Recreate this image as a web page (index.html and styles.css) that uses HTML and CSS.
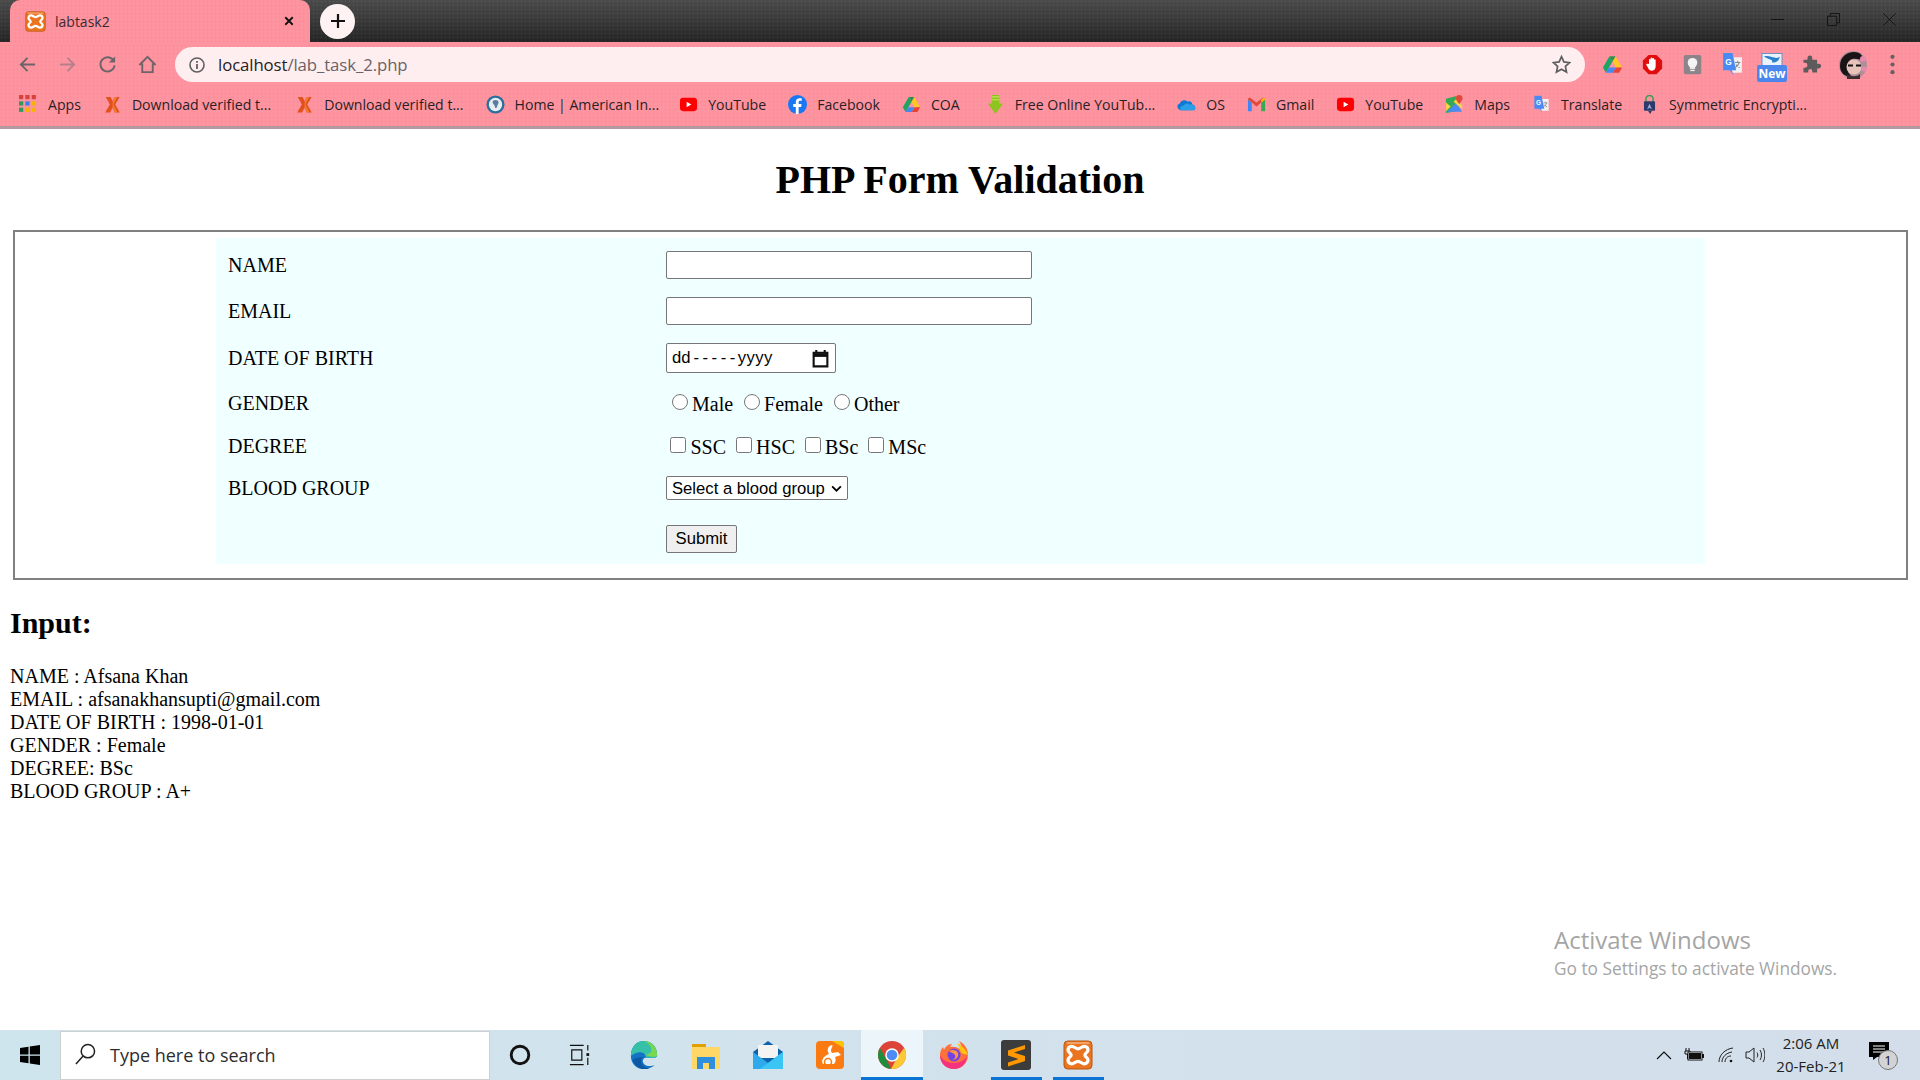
FILE: index.html
```html
<!DOCTYPE html>
<html lang="en">
<head>
<meta charset="utf-8">
<title>labtask2</title>
<link rel="stylesheet" href="styles.css">
</head>
<body>
<svg class="defs" width="0" height="0" aria-hidden="true">
  <symbol id="xampp" viewBox="0 0 24 24">
    <rect x=".8" y=".8" width="22.400" height="22.400" rx="3" fill="#ea7420" stroke="#b9560f" stroke-width=".8"/>
    <rect x="3" y="1.800" width="18" height="1.200" fill="#f7b27e"/>
    <path d="M7 5C9 5 10 7 12 7C14 7 15 5 17 5C19 5 20 6.500 20 8C20 10 17.500 10.500 17.500 12C17.500 13.500 20 14 20 16C20 17.500 19 19 17 19C15 19 14 17 12 17C10 17 9 19 7 19C5 19 4 17.500 4 16C4 14 6.500 13.500 6.500 12C6.500 10.500 4 10 4 8C4 6.500 5 5 7 5Z" fill="none" stroke="#fff" stroke-width="2.600"/>
  </symbol>
  <symbol id="bm-x" viewBox="0 0 20 20">
    <path d="M3 2h5l2.200 4.500L12.500 2h5l-4.700 8 4.900 8.500h-5.200L10 13.500 7.500 18.500H2.300L7.200 10Z" fill="#e2501d"/>
    <path d="M10.200 6.500 12.500 2h2.500l-4 8 4.200 8.500h-2.700L10 13.500Z" fill="#f27a2b"/>
  </symbol>
  <symbol id="yt" viewBox="0 0 20 20">
    <rect x="1" y="3" width="18" height="14" rx="3.500" fill="#f00"/>
    <path d="M8 7v6l5-3Z" fill="#fff"/>
  </symbol>
  <symbol id="drive" viewBox="0 0 24 24">
    <path d="M8.500 2.500h7L23 15.500h-7Z" fill="#ffc825"/>
    <path d="M8.500 2.500 1 15.500l3.500 6L12 8.500Z" fill="#1fa463"/>
    <path d="M8.500 2.500h7l-3.500 6Z" fill="#2f8a5a"/>
    <path d="M8 15.500h8l-3.500 6h-8Z" fill="#4688f1"/>
    <path d="M16 15.500h7l-3.500 6h-7Z" fill="#e94235"/>
  </symbol>
</svg>

<div class="browser">
  <div class="tabstrip">
    <div class="tab">
      <svg class="fav"><use href="#xampp"/></svg>
      <span class="tab-title">labtask2</span>
      <svg class="tab-x" viewBox="0 0 12 12"><path d="M1.500 1.500l9 9M10.500 1.500l-9 9" stroke="#111" stroke-width="2.200"/></svg>
    </div>
    <div class="newtab"><svg viewBox="0 0 16 16"><path d="M8 1v14M1 8h14" stroke="#111" stroke-width="2.200"/></svg></div>
    <div class="winctl">
      <svg viewBox="0 0 14 14"><path d="M0 7h14" stroke="#111"/></svg>
      <svg viewBox="0 0 14 14"><path d="M.5 3.500h10v10H.5ZM3.500 3.500v-3h10v10h-3" fill="none" stroke="#111"/></svg>
      <svg viewBox="0 0 14 14"><path d="M.5.5l13 13M13.500.5l-13 13" stroke="#111"/></svg>
    </div>
  </div>

  <div class="toolbar">
    <svg class="nav" viewBox="0 0 20 20"><path d="M18 10H3M10 3l-7 7 7 7" fill="none" stroke="#6b6468" stroke-width="2"/></svg>
    <svg class="nav" viewBox="0 0 20 20"><path d="M2 10h15M10 3l7 7-7 7" fill="none" stroke="#b5808a" stroke-width="2"/></svg>
    <svg class="nav" viewBox="0 0 20 20"><path d="M16.500 6A7.500 7.500 0 1 0 17.500 11" fill="none" stroke="#6b6468" stroke-width="2"/><path d="M18 1.500V8h-6.500Z" fill="#6b6468"/></svg>
    <svg class="nav" viewBox="0 0 20 20"><path d="M1.500 10.500 10 2l8.500 8.500M4.500 9v9h11V9" fill="none" stroke="#6b6468" stroke-width="2"/></svg>
    <div class="omnibox">
      <svg class="info" viewBox="0 0 16 16"><circle cx="8" cy="8" r="7" fill="none" stroke="#5f5f5f" stroke-width="1.600"/><path d="M8 7v5M8 4v1.800" stroke="#5f5f5f" stroke-width="1.800"/></svg>
      <span class="url"><b>localhost</b>/lab_task_2.php</span>
      <svg class="star" viewBox="0 0 20 20"><path d="M10 1.800l2.500 5.500 6 .7-4.400 4 1.200 6L10 15l-5.300 3 1.200-6-4.400-4 6-.7Z" fill="none" stroke="#5f5f5f" stroke-width="1.800"/></svg>
    </div>
    <div class="exts">
      <svg class="ext"><use href="#drive"/></svg>
      <svg class="ext" viewBox="0 0 24 24"><path d="M7.500 1h9L23 7.500v9L16.500 23h-9L1 16.500v-9Z" fill="#e00d0d"/><path d="M8 11V6.500c0-1.200 1.800-1.200 1.800 0V5c0-1.300 2-1.300 2 0v.5c0-1.300 2-1.300 2 0V7c0-1.200 1.800-1.200 1.800 0v7c0 3-1.500 5-4.300 5-2.300 0-3.300-1-4.300-3l-2-3.500c-.6-1.200 1-2 1.800-1Z" fill="#fff"/></svg>
      <svg class="ext" viewBox="0 0 24 24"><rect x="2" y="1" width="20" height="22" rx="2" fill="#8c8488"/><circle cx="12" cy="10" r="5.500" fill="#f4f4f4"/><rect x="9" y="15" width="6" height="2" fill="#f4f4f4"/><rect x="9.500" y="18" width="5" height="1.500" fill="#f4f4f4"/></svg>
      <svg class="ext tall" viewBox="0 0 20 24">
        <path d="M9 5h10v15H10Z" fill="#f1f1f1"/>
        <path d="M12.500 10h5M15 8.500V10M16.500 10c-.5 2-2 4-4 5M13.500 12c.8 1.400 2 2.500 3.500 3" fill="none" stroke="#888"/>
        <path d="M1 1h9l3.500 16.500H9l2 5-3.500-5H1Z" fill="#4a8af4"/>
        <text x="3" y="12" class="t-g">G</text>
      </svg>
      <div class="ext-new">
        <svg viewBox="0 0 22 10"><rect width="20" height="12" x="1" y="0" fill="#eaf2fb" stroke="#6e8fc2"/><path d="M3 3c6-2 12 4 16 0-1 4-3 6-8 6 2-3-4-3-8-6Z" fill="#2c7fc9"/></svg>
        <span>New</span>
      </div>
      <svg class="ext" viewBox="0 0 24 24"><path d="M3 7h5V5a3 3 0 0 1 6 0v2h6v5h2a3 3 0 0 1 0 6h-2v5h-6v-2a2.500 2.500 0 0 0-5 0v2H3v-6h2a3 3 0 0 0 0-6H3Z" fill="#5f5a5c" transform="scale(.92)"/></svg>
      <svg class="ext avatar" viewBox="0 0 28 28"><circle cx="14" cy="14" r="14" fill="#b08e98"/><path d="M1 15C1 5 9 1 15 1c7 0 10 5 10 10-3-3-8-4-12-3-3 1-5 4-5 8 0 4 2 7 5 10C6 26 1 22 1 15Z" fill="#1a1416"/><ellipse cx="15" cy="16" rx="7.500" ry="7.500" fill="#e8c3bb"/><path d="M9 14.500h5M17 14.500h5" stroke="#111" stroke-width="2"/><path d="M8 23c4 3 10 3 13 0v5H8Z" fill="#3a2c30"/><circle cx="24" cy="8" r="3" fill="#e58bb0"/><circle cx="25" cy="18" r="2.500" fill="#e58bb0"/></svg>
      <svg class="ext menu" viewBox="0 0 6 22"><circle cx="3" cy="3" r="2.200" fill="#66605f"/><circle cx="3" cy="11" r="2.200" fill="#66605f"/><circle cx="3" cy="19" r="2.200" fill="#66605f"/></svg>
    </div>
  </div>

  <div class="bookmarks">
    <div class="bm"><svg class="bmi" viewBox="0 0 18 18"><g><rect x="0" y="0" width="4" height="4" fill="#d9413c"/><rect x="6" y="0" width="4" height="4" fill="#d9413c"/><rect x="12" y="0" width="4" height="4" fill="#d9413c"/><rect x="0" y="6" width="4" height="4" fill="#2a9d5c"/><rect x="6" y="6" width="4" height="4" fill="#3f7ee8"/><rect x="12" y="6" width="4" height="4" fill="#f4b400"/><rect x="0" y="12" width="4" height="4" fill="#2a9d5c"/><rect x="6" y="12" width="4" height="4" fill="#f4b400"/><rect x="12" y="12" width="4" height="4" fill="#f4b400"/></g></svg><span>Apps</span></div>
    <div class="bm"><svg class="bmi"><use href="#bm-x"/></svg><span>Download verified t...</span></div>
    <div class="bm nudge-r2"><svg class="bmi"><use href="#bm-x"/></svg><span>Download verified t...</span></div>
    <div class="bm"><svg class="bmi" viewBox="0 0 20 20"><circle cx="10" cy="10" r="9.500" fill="#2a6f9e"/><circle cx="10" cy="10" r="7" fill="#e9eef2"/><path d="M7 6.500c1.500-1.500 4.500-1.500 6 0 .8 2-.5 3-1 4.500-.3 1-.5 2.500-1.500 3-1.500-.5-1-2-1.500-3C8 9.500 6.500 8.500 7 6.500Z" fill="#5a7f9e"/></svg><span>Home | American In...</span></div>
    <div class="bm nudge-l2"><svg class="bmi"><use href="#yt"/></svg><span>YouTube</span></div>
    <div class="bm"><svg class="bmi" viewBox="0 0 20 20"><circle cx="10" cy="10" r="10" fill="#1877f2"/><path d="M11.200 20v-7.500h2.600l.5-3h-3.100V7.700c0-.9.400-1.600 1.700-1.600h1.500V3.500c-.6-.1-1.400-.2-2.200-.2-2.500 0-4 1.500-4 4.100v2.100H5.500v3h2.700V20Z" fill="#fff"/></svg><span>Facebook</span></div>
    <div class="bm"><svg class="bmi"><use href="#drive"/></svg><span>COA</span></div>
    <div class="bm nudge-r4"><svg class="bmi" viewBox="0 0 20 20"><path d="M6 0h8v9h4l-8 11-8-11h4Z" fill="#8fc31f"/><path d="M6 2h8M6 5h8" stroke="#c8e25a" stroke-width="1.200"/></svg><span>Free Online YouTub...</span></div>
    <div class="bm"><svg class="bmi" viewBox="0 0 20 20"><path d="M2 15c-2-1-2.500-5 1-6 .5-3 5-5 8-2 2.500-1 5 .5 5 3 2.500 0 4 3 3 5-.3.5-1 1-2 1H4c-1 0-1.500-.5-2-1Z" fill="#0f78d4"/><path d="M4 16c-1.500-2 0-5 3-5 1-2 4-3 6-1 2-1 5 0 6 3 .3 1 0 3-2 3Z" fill="#2a9fe8"/></svg><span>OS</span></div>
    <div class="bm"><svg class="bmi" viewBox="0 0 20 20"><path d="M1 17V5l4 3v9Z" fill="#4285f4"/><path d="M19 17V5l-4 3v9Z" fill="#34a853"/><path d="M1 5c0-2 2-2.500 3-1.500L10 8l6-4.500C17 2.500 19 3 19 5l-4 3-5 4-5-4Z" fill="#e04a3a"/><path d="M15 8l4-3c0-1-.5-2-1.500-2L15 5Z" fill="#fbbc05"/></svg><span>Gmail</span></div>
    <div class="bm"><svg class="bmi"><use href="#yt"/></svg><span>YouTube</span></div>
    <div class="bm"><svg class="bmi" viewBox="0 0 20 20"><path d="M1 4l11-3v16L1 19Z" fill="#34a853"/><path d="M1 19 12 8l6 9.500H1Z" fill="#4a8af4"/><path d="M1 8l5 4-5 5Z" fill="#ffd04b"/><path d="M9 7l3-3 6 7v4Z" fill="#f6d24a"/><path d="M15 0a3.500 3.500 0 0 1 3.500 3.500c0 2.500-3.500 6-3.500 6s-3.500-3.500-3.500-6A3.500 3.500 0 0 1 15 0Z" fill="#e04a3a"/></svg><span>Maps</span></div>
    <div class="bm"><svg class="bmi" viewBox="0 0 20 24">
        <path d="M9 5h10v15H10Z" fill="#f1f1f1"/>
        <path d="M12.500 10h5M15 8.500V10M16.500 10c-.5 2-2 4-4 5M13.500 12c.8 1.400 2 2.500 3.500 3" fill="none" stroke="#888"/>
        <path d="M1 1h9l3.500 16.500H9l2 5-3.500-5H1Z" fill="#4a8af4"/>
        <text x="3" y="12" class="t-g">G</text>
      </svg><span>Translate</span></div>
    <div class="bm nudge-l4"><svg class="bmi" viewBox="0 0 20 24"><path d="M5.500 9V5a4.500 4.500 0 0 1 9 0v4" fill="none" stroke="#3e9b52" stroke-width="2"/><rect x="3" y="8" width="14" height="12" rx="1" fill="#2d3a6b"/><path d="M7 18l3-7 3 7-3-2Z" fill="#9fb1e0"/><path d="M8 20h5l-2 4Z" fill="#2d3a6b"/></svg><span>Symmetric Encrypti...</span></div>
  </div>
</div>

<main class="page">
  <h1 class="title">PHP Form Validation</h1>
  <form class="panel">
    <table class="ftable">
      <tr class="r-first"><td class="lbl">NAME</td><td><input class="txt" type="text"></td></tr>
      <tr><td class="lbl">EMAIL</td><td><input class="txt" type="text"></td></tr>
      <tr class="r-date">
        <td class="lbl">DATE OF BIRTH</td>
        <td><div class="date"><span class="dparts"><span>dd</span><span class="dashes">-----</span><span class="yyyy">yyyy</span></span><svg viewBox="0 0 18 18"><path d="M2.500 3.500h13v13h-13Z" fill="none" stroke="#111" stroke-width="2"/><path d="M2 4h14v3.500H2Z" fill="#111"/><path d="M5 1v3M13 1v3" stroke="#111" stroke-width="2"/></svg></div></td>
      </tr>
      <tr class="r-gender">
        <td class="lbl">GENDER</td>
        <td class="opts radios">
          <label><input type="radio" name="g">Male</label>
          <label><input type="radio" name="g">Female</label>
          <label><input type="radio" name="g">Other</label>
        </td>
      </tr>
      <tr>
        <td class="lbl">DEGREE</td>
        <td class="opts checks">
          <label><input type="checkbox">SSC</label>
          <label><input type="checkbox">HSC</label>
          <label><input type="checkbox">BSc</label>
          <label><input type="checkbox">MSc</label>
        </td>
      </tr>
      <tr>
        <td class="lbl">BLOOD GROUP</td>
        <td><select class="sel"><option>Select a blood group</option><option>A+</option></select></td>
      </tr>
      <tr class="r-submit"><td></td><td><button class="btn" type="button">Submit</button></td></tr>
    </table>
  </form>
  <h2 class="sub">Input:</h2>
  <p class="out">NAME : Afsana Khan<br>EMAIL : afsanakhansupti@gmail.com<br>DATE OF BIRTH : 1998-01-01<br>GENDER : Female<br>DEGREE: BSc<br>BLOOD GROUP : A+</p>
  <div class="watermark"><div class="wm1">Activate Windows</div><div class="wm2">Go to Settings to activate Windows.</div></div>
</main>

<footer class="taskbar">
  <svg class="win" viewBox="0 0 20 20"><path d="M0 3l8.500-1.200V9.500H0ZM9.800 1.600 20 0v9.500H9.800ZM0 10.800h8.500v7.500L0 17ZM9.800 10.800H20V20L9.800 18.500Z" fill="#000"/></svg>
  <div class="search">
    <svg viewBox="0 0 22 24"><circle cx="13.500" cy="8.500" r="7" fill="none" stroke="#222" stroke-width="1.600"/><path d="M8.500 13.500 1 22" stroke="#222" stroke-width="1.600"/></svg>
    <span>Type here to search</span>
  </div>
  <div class="cell first"><svg class="ti" viewBox="0 0 20 20"><circle cx="10" cy="10" r="8" fill="none" stroke="#111" stroke-width="2.600"/></svg></div>
  <div class="cell"><svg class="ti" viewBox="0 0 24 24"><path d="M1 1.500h15M1 22.500h15M3 6.500h11v11H3ZM20.500 1v6M20.500 15v8" fill="none" stroke="#111" stroke-width="1.300"/><rect x="19" y="10" width="3" height="3" fill="#111"/></svg></div>
  <div class="apps">
    <div class="app"><svg viewBox="0 0 30 32"><path d="M29 16C29 6 22 1 15 1 7 1 1 7 1 17c0 8 6 14 14 14 5 0 9-2 11-4-3 1-10 2-12-3-1-3 1-5 3-5h8c3 0 4-1 4-3Z" fill="#1473c4"/><path d="M1 17C1 7 7 1 15 1c7 0 14 5 14 15 0 2-1 3-4 3h-8c0-3-2-6-6-6-5 0-9 3-10 4Z" fill="#35c1a8"/><path d="M29 16c0-7-5-15-14-15 5 2 8 6 8 10 0 2-2 4-6 5 5 2 12 3 12 0Z" fill="#7bd651"/><path d="M3 21c1 5 6 10 12 10 2 0 4-.3 6-1-5 0-9-3-9-8 0-2 1-3 2-4-4 0-8 1-11 3Z" fill="#0c59a4"/></svg></div>
    <div class="app"><svg viewBox="0 0 30 28"><path d="M1 3h14v4H1Z" fill="#e0a100"/><path d="M1 6h28v22H1Z" fill="#ffd767"/><path d="M6 16h18v12h-6v-6h-6v6H6Z" fill="#2f8fdc"/></svg></div>
    <div class="app"><svg viewBox="0 0 30 30"><path d="M0 12 15 1l15 11v17H0Z" fill="#0d62ab"/><path d="M5 5h20v13H5Z" fill="#f3f3f3"/><path d="M0 12l15 11 15-11v17H0Z" fill="#2eaaec"/><path d="M15 23l15-11v17H7Z" fill="#3bc5f5"/></svg></div>
    <div class="app"><svg viewBox="0 0 28 30"><rect x="0" y="1" width="28" height="28" rx="4" fill="#fb7b12"/><path d="M28 8V5a4 4 0 0 0-4-4h-8Z" fill="#fdc400"/><path d="M7 24c-3-5 3-9 6-10-2-3-2-8 3-9 2 2-3 4 0 8l6-1 3 3-6 2c1 2 1 5-1 7Z" fill="#fff"/><circle cx="12" cy="22" r="3.500" fill="none" stroke="#fb7b12" stroke-width="1.500"/></svg></div>
    <div class="app active"><svg viewBox="0 0 30 30"><circle cx="15" cy="15" r="14" fill="#db4437"/><path d="M27.100 8A14 14 0 0 1 14 29l6.500-12Z" fill="#fcc934"/><path d="M14 29A14 14 0 0 1 2.900 8l6.500 11.500Z" fill="#1e8e3e"/><circle cx="15" cy="15" r="6.800" fill="#fff"/><circle cx="15" cy="15" r="5.300" fill="#4d8cf5"/></svg></div>
    <div class="app"><svg viewBox="0 0 30 30"><path d="M15 29C7 29 1 23 1 15c0-3 1-6 3-8l1 3c1-3 4-6 8-6l-2 3c5-1 9 1 11 3 1-3 0-6-2-9 6 3 9 8 9 14 0 8-6 14-14 14Z" fill="#ff7139"/><path d="M15 29C8 29 1 24 1 15c2 4 6 8 14 8 6 0 11-3 13-7 0 6-5 13-13 13Z" fill="#f6317f"/><path d="M18 3c3 1 10 7 11 12l-7-2c-1-4-2-7-4-10Z" fill="#ffc40c"/><circle cx="15" cy="15" r="6.500" fill="#7542e5"/><path d="M10 11c3-2 8-1 9 2 1 4-2 7-6 7 3-1 4-3 3-5s-4-2-6-4Z" fill="#ff9640"/></svg></div>
    <div class="app open"><svg viewBox="0 0 30 30"><rect width="30" height="30" rx="3" fill="#3c3c3c"/><path d="M24 5 7 10.500v5L17.500 19 7 22.500v4l17-5.500v-5L13 12.500 24 9Z" fill="#ff9800"/></svg></div>
    <div class="app open"><svg><use href="#xampp"/></svg></div>
  </div>
  <div class="tray">
    <svg class="tri chev" viewBox="0 0 16 10"><path d="M1 9l7-7 7 7" fill="none" stroke="#111" stroke-width="1.200"/></svg>
    <svg class="tri batt" viewBox="0 0 20 14"><path d="M2 0v3M5 0v3M1 3h5v3H1ZM3.500 6v5" stroke="#111" fill="none"/><rect x="4" y="4" width="14" height="8" fill="#fff" stroke="#111"/><rect x="5" y="5" width="12" height="6" fill="#111"/><rect x="18" y="6" width="2" height="4" fill="#111"/></svg>
    <svg class="tri wifi" viewBox="0 0 16 16"><path d="M1 15C1 8 7 2 15 1M4 15c0-5 4-9 10-10M7 15c0-3 2-6 6-6" fill="none" stroke="#222"/><circle cx="13" cy="14" r="1.300" fill="#111"/></svg>
    <svg class="tri spk" viewBox="0 0 20 16"><path d="M1 5h3l5-4v14l-5-4H1Z" fill="none" stroke="#222"/><path d="M12 5.500c1 1.500 1 3.500 0 5M15 3c2 3 2 7 0 10M18 1c2.500 4 2.500 10 0 14" fill="none" stroke="#222"/></svg>
    <div class="clock"><div>2:06 AM</div><div>20-Feb-21</div></div>
    <div class="notify">
      <svg viewBox="0 0 20 18"><path d="M0 0h20v15H8l-4 3v-3H0Z" fill="#000"/><path d="M4 4h12M4 7h12M4 10h12" stroke="#fff"/></svg>
      <span class="badge">1</span>
    </div>
  </div>
</footer>
</body>
</html>
```

FILE: styles.css
```css
* { box-sizing: border-box; }
html, body { margin: 0; padding: 0; height: 100%; }
body {
  width: 1920px; height: 1080px; overflow: hidden;
  display: flex; flex-direction: column;
  font-family: "Liberation Serif", serif;
  background: #fff; color: #000;
}
.defs { position: absolute; }
.t-g { font: bold 8px "Liberation Sans", sans-serif; fill: #fff; }

/* browser chrome */
.browser {
  height: 129px; flex: none;
  font-family: "Open Sans", "Noto Sans", sans-serif;
  background-color: #ff94a1;
  background-image: radial-gradient(circle at 1.500px 1.500px, #f98a98 .8px, transparent 1.100px);
  background-size: 4px 4px;
  border-bottom: 3px solid #b69aa0;
}
.tabstrip {
  height: 42px; display: flex; align-items: center;
  background-color: #2f2f2f;
  background-image:
    radial-gradient(circle at 1.500px 1.500px, rgba(255,255,255,.07) .8px, transparent 1.100px),
    linear-gradient(#4a4a4a, #3a3a3a 45%, #242424);
  background-size: 4px 4px, auto;
}
.tab {
  width: 300px; height: 42px; margin-left: 10px;
  border-radius: 10px 10px 0 0;
  display: flex; align-items: center;
  padding: 0 14px 0 15px;
  background-color: #ff94a1;
  background-image: radial-gradient(circle at 1.500px 1.500px, #f98a98 .8px, transparent 1.100px);
  background-size: 4px 4px;
}
.fav { width: 21px; height: 21px; flex: none; }
.tab-title { font-size: 14px; margin-left: 9px; color: #3c2a2e; flex: 1; }
.tab-x { width: 10px; height: 10px; margin-right: 2px; }
.newtab {
  width: 35px; height: 35px; border-radius: 50%;
  background: #fff2f3; margin-left: 10px;
  display: flex; align-items: center; justify-content: center;
}
.newtab svg { width: 16px; height: 16px; }
.winctl { margin-left: auto; display: flex; align-items: center; gap: 43px; padding: 0 24px 3px 0; }
.winctl svg { width: 13px; height: 13px; display: block; }

.toolbar { height: 45px; display: flex; align-items: center; padding: 0 0 0 18px; }
.nav { width: 19px; height: 19px; flex: none; margin-right: 21px; }
.omnibox {
  width: 1410px; height: 35px; margin-left: -3px;
  background: #ffeef0; border-radius: 18px;
  display: flex; align-items: center; padding: 0 14px 0 14px;
}
.info { width: 16px; height: 16px; margin-right: 13px; }
.url { font-size: 16.800px; color: #6a6266; flex: 1; letter-spacing: -.1px; }
.url b { font-weight: 400; color: #241c20; }
.star { width: 19px; height: 19px; }
.exts { display: flex; align-items: center; margin-left: 17px; gap: 19px; }
.ext { width: 21px; height: 21px; flex: none; }
.ext.tall { height: 25px; }
.ext-new { width: 30px; height: 30px; display: flex; flex-direction: column; margin: 4px -5px 0 -5px; }
.ext-new svg { width: 22px; height: 13px; margin: 0 auto; }
.ext-new span {
  background: #4a86ec; color: #fff; font: bold 12px/17px "Open Sans", sans-serif;
  text-align: center; border-radius: 2px;
}
.avatar { width: 28px; height: 28px; margin: 0 -3px 0 -2px; }
.menu { width: 7px; height: 21px; margin-left: 6px; }

.bookmarks { height: 39px; display: flex; align-items: center; padding: 0 0 5px 19px; gap: 22px; }
.bm { display: flex; align-items: center; gap: 10px; font-size: 14.100px; color: #2a1f24; white-space: nowrap; }
.bmi { width: 19px; height: 19px; flex: none; }
.nudge-r2 { margin-left: 2px; }
.nudge-l2 { margin-left: -2px; }
.nudge-r4 { margin-left: 4px; }
.nudge-l4 { margin-left: -4px; }

/* page */
.page { flex: 1; position: relative; padding: 0 10px; }
.title { margin: 28px 0 27px; text-align: center; font-size: 40px; line-height: 46px; font-weight: 700; }
.panel { display: block; margin: 0 2px 0 3px; border: 2px solid #808080; padding: 6px 0 14px; }
.ftable {
  width: 1489px; margin: 0 auto; background: #f0ffff;
  border-collapse: separate; border-spacing: 2px; font-size: 20px;
}
.ftable td { padding: 8px 10px; line-height: 23px; }
.ftable .lbl { width: 436px; }
.ftable .r-first td { padding-top: 11px; }
.ftable .r-date td { padding-bottom: 7px; }
.ftable .r-gender td { padding-top: 10px; padding-bottom: 10px; }
.ftable .r-submit td { padding-top: 15px; padding-bottom: 9px; }
.txt { display: block; width: 366px; height: 28px; border: 1px solid #767676; border-radius: 2px; background: #fff; padding: 1px 2px; }
.date {
  width: 170px; height: 30px; border: 1px solid #767676; border-radius: 2px; background: #fff;
  display: flex; align-items: center; justify-content: space-between;
  padding: 0 5px; font: 16.670px "Liberation Sans", sans-serif;
}
.date svg { width: 19px; height: 19px; }
.dashes { letter-spacing: 3.500px; margin-left: 3px; }
.yyyy { letter-spacing: .4px; margin-left: -1px; }
.opts { position: relative; top: 1px; }
.opts input { width: 16px; height: 16px; vertical-align: 1px; }
.radios input { margin: 0 4px 0 6px; }
.checks label { margin-right: .5px; }
.checks input { margin: 0 4.500px 0 4px; }
.sel {
  display: block; width: 182px; height: 24px; font: 16.670px "Liberation Sans", sans-serif;
  background: #fff url("data:image/svg+xml,%3Csvg xmlns='http://www.w3.org/2000/svg' viewBox='0 0 12 8'%3E%3Cpath d='M1 1.500l5 5 5-5' fill='none' stroke='%23000' stroke-width='2'/%3E%3C/svg%3E") no-repeat right 5px center / 11px 7px;
  appearance: none; padding: 0 18px 0 5px; color: #000;
  border: 1px solid #767676; border-radius: 2px;
}
.btn { display: block; width: 71px; height: 28px; font: 16.670px "Liberation Sans", sans-serif; background: #efefef; border: 1px solid #767676; border-radius: 2px; padding: 0; color: #000; }
.sub { font-size: 30px; line-height: 34px; margin: 26px 0 25px; font-weight: 700; }
.out { margin: 0; font-size: 20px; line-height: 23px; }
.watermark { position: absolute; left: 1554px; top: 795px; color: #a5a5a5; font-family: "Open Sans", "Noto Sans", sans-serif; }
.wm1 { font-size: 24px; line-height: 32px; }
.wm2 { font-size: 17.300px; line-height: 26px; }

/* taskbar */
.taskbar {
  height: 50px; flex: none; display: flex; align-items: stretch;
  background: linear-gradient(90deg, #cfe5ee, #d2e2ec 50%, #d3deea);
  font-family: "Open Sans", "Noto Sans", sans-serif;
}
.win { width: 20px; height: 20px; margin: 15px 20px 0 20px; }
.search {
  width: 430px; margin-top: 1px; background: #fff; border: 1px solid #cfcfcf;
  display: flex; align-items: center; padding: 0 0 2px 14px; gap: 14px;
  font-size: 18px; color: #2d2d2d;
}
.search svg { width: 21px; height: 23px; }
.cell { width: 60px; display: flex; align-items: center; justify-content: center; }
.ti { width: 22px; height: 22px; }
.apps { display: flex; margin-left: 3px; }
.app { width: 62px; display: flex; align-items: center; justify-content: center; position: relative; }
.app svg { width: 30px; height: 30px; }
.app.active { background: #ecf5f9; }
.app.active::after, .app.open::after {
  content: ""; position: absolute; bottom: 0; height: 3px; background: #0a74d4;
}
.app.active::after { left: 0; right: 0; }
.app.open::after { left: 6px; right: 5px; }
.tray { margin-left: auto; display: flex; align-items: center; position: relative; padding-right: 9px; }
.tri { flex: none; }
.chev { width: 16px; height: 10px; margin-right: 12px; }
.batt { width: 20px; height: 14px; margin-right: 14px; }
.wifi { width: 16px; height: 16px; margin-right: 11px; }
.spk { width: 20px; height: 16px; margin-right: 9px; }
.clock { width: 74px; text-align: center; font-size: 15px; line-height: 23px; color: #222; margin-right: 21px; }
.notify { width: 34px; height: 34px; position: relative; margin-right: 8px; }
.notify svg { width: 20px; height: 18px; position: absolute; left: 0; top: 4px; }
.badge {
  position: absolute; left: 9px; top: 12px; width: 20px; height: 20px; border-radius: 50%;
  background: #d3d3d3; border: 1px solid #777; font-size: 13px; line-height: 18px; text-align: center; color: #111;
}
```
